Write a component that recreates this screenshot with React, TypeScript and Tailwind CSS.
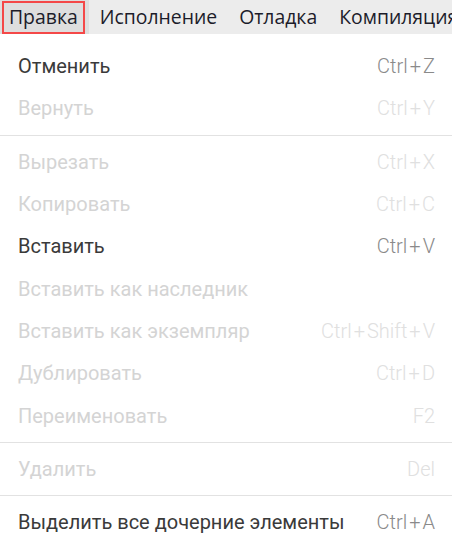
const menus = ["Правка", "Исполнение", "Отладка", "Компиляция"];

type Item = { label: string; shortcut?: string; enabled?: boolean } | "sep";

const items: Item[] = [
  { label: "Отменить", shortcut: "Ctrl+Z", enabled: true },
  { label: "Вернуть", shortcut: "Ctrl+Y" },
  "sep",
  { label: "Вырезать", shortcut: "Ctrl+X" },
  { label: "Копировать", shortcut: "Ctrl+C" },
  { label: "Вставить", shortcut: "Ctrl+V", enabled: true },
  { label: "Вставить как наследник" },
  { label: "Вставить как экземпляр", shortcut: "Ctrl+Shift+V" },
  { label: "Дублировать", shortcut: "Ctrl+D" },
  { label: "Переименовать", shortcut: "F2" },
  "sep",
  { label: "Удалить", shortcut: "Del" },
  "sep",
  { label: "Выделить все дочерние элементы", shortcut: "Ctrl+A", enabled: true },
];

const Shortcut = ({ keys, enabled }: { keys: string; enabled?: boolean }) => {
  const parts = keys.split("+");
  return (
    <span className={"font-light " + (enabled ? "text-[#8a8a8a]" : "text-[#e0e0e0]")}>
      {parts.map((p, i) => (
        <span key={i}>
          {i > 0 && <span className="px-[2px]">+</span>}
          {p}
        </span>
      ))}
    </span>
  );
};

const App = () => {
  return (
    <div className="w-[452px] h-[549px] overflow-hidden bg-white flex flex-col">
      {/* menu bar, last title runs past the window edge as in the original */}
      <div className="relative shrink-0 h-[34px] bg-[#ececec] flex items-center whitespace-nowrap overflow-hidden font-['Open_Sans','Noto_Sans',sans-serif] text-[19.4px] text-[#1c1c2a]">
        {menus.map((m, i) => (
          <div
            key={m}
            className={
              i === 0
                ? "shrink-0 h-full flex items-center pl-[9px] pr-[11px] bg-[#dedede]"
                : "shrink-0 h-full flex items-center px-[11px]"
            }
          >
            {m}
          </div>
        ))}
        <div className="absolute left-[2px] top-[1px] w-[83px] h-[33px] border-2 border-[#f44848]" />
      </div>

      {/* dropdown */}
      <div className="flex-1 pt-[11px] font-['Roboto',sans-serif] text-[20px] shadow-[0_-1px_3px_rgba(0,0,0,0.08)]">
        {items.map((it, i) =>
          it === "sep" ? (
            <div key={i} className="py-[5px]">
              <div className="h-px bg-[#e2e2e2]" />
            </div>
          ) : (
            <div key={i} className="h-[42.3px] flex items-center justify-between pl-[18px] pr-[17px]">
              <span className={it.enabled ? "text-[#3a3a3a]" : "text-[#d4d4d4]"}>{it.label}</span>
              {it.shortcut && <Shortcut keys={it.shortcut} enabled={it.enabled} />}
            </div>
          )
        )}
      </div>
    </div>
  );
};

export default App;
